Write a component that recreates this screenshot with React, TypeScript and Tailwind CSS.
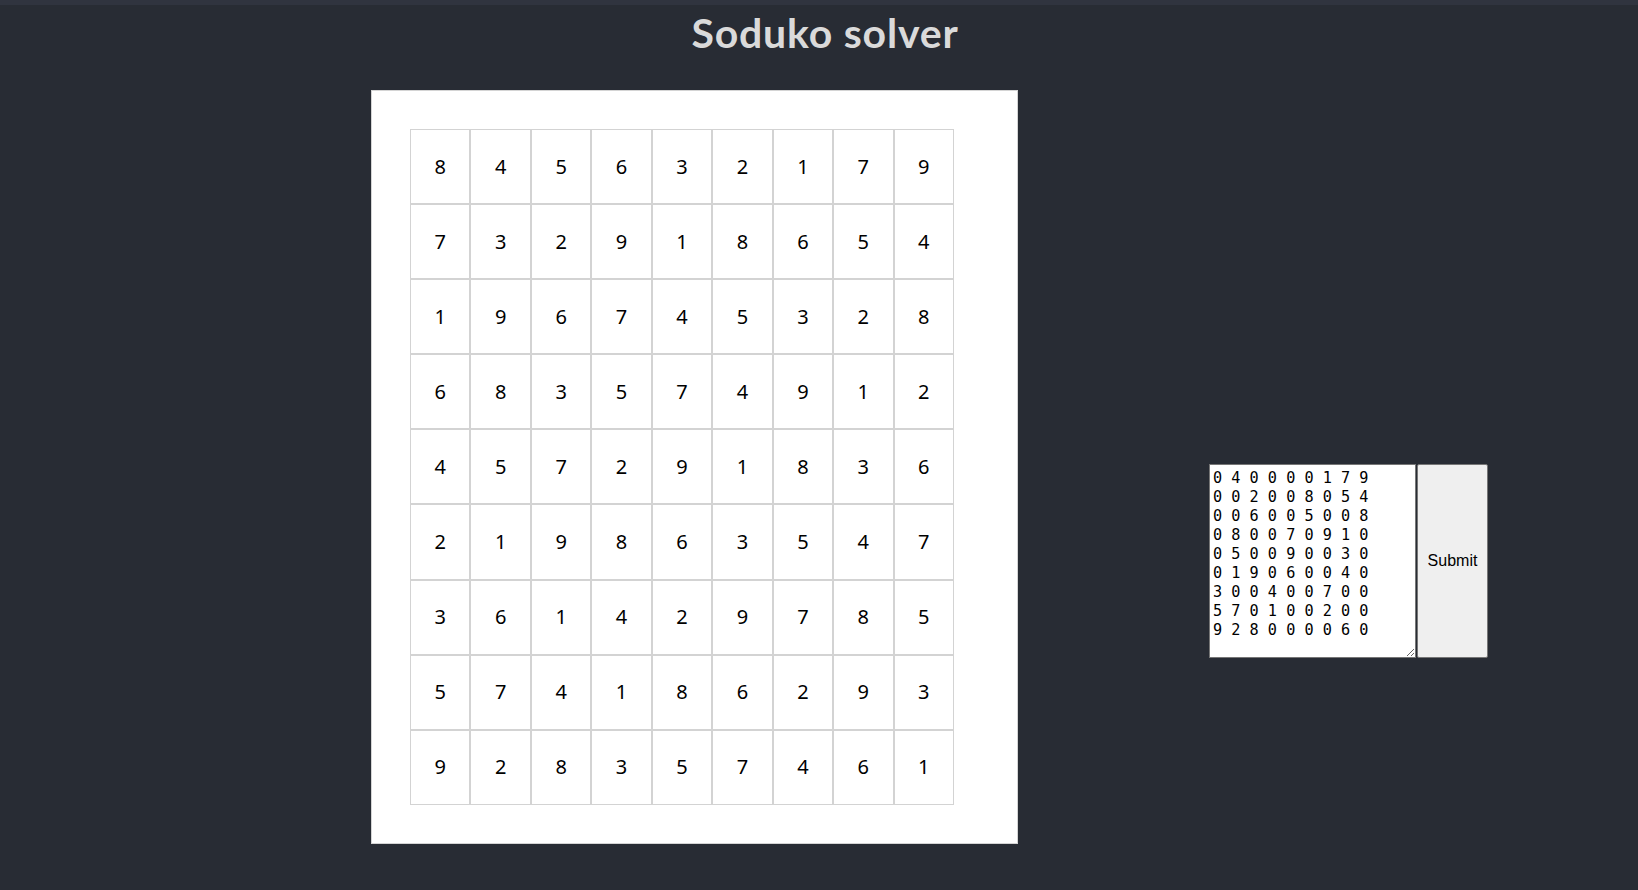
const solved = [
  [8, 4, 5, 6, 3, 2, 1, 7, 9],
  [7, 3, 2, 9, 1, 8, 6, 5, 4],
  [1, 9, 6, 7, 4, 5, 3, 2, 8],
  [6, 8, 3, 5, 7, 4, 9, 1, 2],
  [4, 5, 7, 2, 9, 1, 8, 3, 6],
  [2, 1, 9, 8, 6, 3, 5, 4, 7],
  [3, 6, 1, 4, 2, 9, 7, 8, 5],
  [5, 7, 4, 1, 8, 6, 2, 9, 3],
  [9, 2, 8, 3, 5, 7, 4, 6, 1],
];

const puzzle = `0 4 0 0 0 0 1 7 9
0 0 2 0 0 8 0 5 4
0 0 6 0 0 5 0 0 8
0 8 0 0 7 0 9 1 0
0 5 0 0 9 0 0 3 0
0 1 9 0 6 0 0 4 0
3 0 0 4 0 0 7 0 0
5 7 0 1 0 0 2 0 0
9 2 8 0 0 0 0 6 0`;

function Board() {
  return (
    <div className="grid w-[544px] grid-cols-9">
      {solved.flat().map((n, i) => (
        <div
          key={i}
          className="flex h-[75.1px] items-center justify-center border border-[#d3d3d3] text-[20px] text-black"
        >
          {n}
        </div>
      ))}
    </div>
  );
}

export default function App() {
  return (
    <div className="min-h-[890px] bg-[#282c34] font-['Noto_Sans',sans-serif]">
      <div className="h-[5px] bg-[#30343f]" />
      <h1 className="pl-[12px] pt-[1px] text-center font-['Lato',sans-serif] text-[41px] font-bold leading-[54px] tracking-[0.8px] text-[#dadada]">
        Soduko solver
      </h1>
      <div className="mt-[30px] flex items-start">
        <div className="ml-[371px] border border-[#d4d4d4] bg-white pb-[38px] pl-[38px] pr-[63px] pt-[38px]">
          <Board />
        </div>
        <form className="ml-[191px] mt-[374px] flex" onSubmit={(e) => e.preventDefault()}>
          <textarea
            defaultValue={puzzle}
            className="h-[194px] w-[207px] border border-[#767676] bg-white px-[3px] pb-[2px] pt-[4px] font-['DejaVu_Sans_Mono',monospace] text-[15.2px] leading-[19px] text-black"
          />
          <button
            type="submit"
            className="ml-px h-[194px] w-[71px] rounded-[2px] border border-[#767676] bg-[#efefef] font-['Liberation_Sans',Arial,sans-serif] text-[16px] text-black"
          >
            Submit
          </button>
        </form>
      </div>
    </div>
  );
}
